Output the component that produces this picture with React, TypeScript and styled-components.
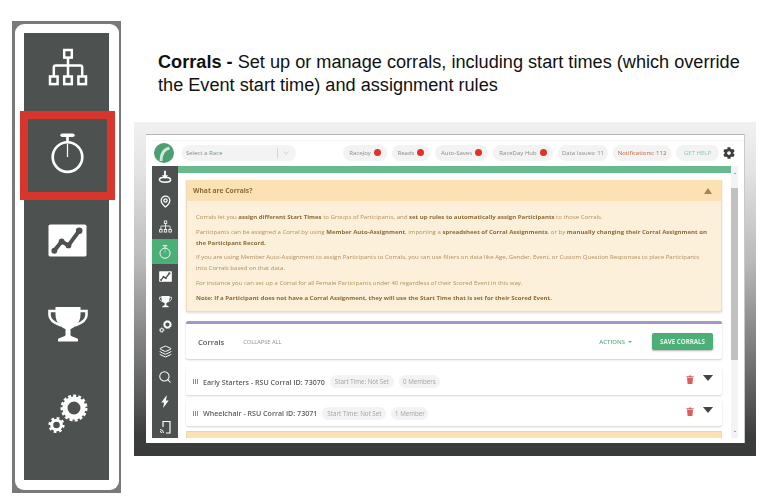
import React from "react";
import styled, { createGlobalStyle } from "styled-components";
import { ChevronDown, Layers, MapPin, Search } from "lucide-react";
import { FaCog } from "react-icons/fa";

const GlobalStyle = createGlobalStyle`
  html, body {
    margin: 0;
    padding: 0;
    background: #fff;
  }
  body {
    font-family: "Open Sans", "Liberation Sans", sans-serif;
  }
`;

const Page = styled.div`
  display: flex;
  width: 768px;
  height: 503px;
  overflow: hidden;
  background: #fff;
`;

/* left column: the enlarged crop of the nav */
const NavFrame = styled.div`
  box-sizing: border-box;
  width: 109px;
  height: 472px;
  margin: 21px 0 0 12px;
  padding: 3px 2px 3px 3px;
  background: #77797a;
  filter: blur(0.4px);
`;

const NavCard = styled.div`
  box-sizing: border-box;
  height: 100%;
  padding: 9px 10px 10px 9px;
  background: #fff;
  border-radius: 9px;
`;

const NavDark = styled.div`
  display: flex;
  flex-direction: column;
  height: 100%;
  background: #4d5150;
`;

const NavItem = styled.div<{ $h: number; $pad?: number }>`
  display: flex;
  align-items: center;
  justify-content: center;
  flex: none;
  box-sizing: border-box;
  height: ${(p) => p.$h}px;
  padding-bottom: ${(p) => p.$pad ?? 0}px;
  padding-left: 2px;
  color: #fff;
`;

const NavActive = styled(NavItem)`
  margin: 0 -6px 0 -4px;
  padding: 0 0 ${(p) => p.$pad ?? 0}px 0;
  border: 8px solid #d8352c;
  background: #4d5150;
`;

/* right column */
const Main = styled.div`
  display: flex;
  flex-direction: column;
  margin-left: 13px;
  width: 622px;
`;

const Heading = styled.h1`
  box-sizing: border-box;
  height: 122px;
  margin: 0;
  padding: 51px 0 0 24px;
  font-family: "Liberation Sans", Arial, sans-serif;
  font-size: 18.15px;
  font-weight: 400;
  line-height: 23px;
  white-space: nowrap;
  color: #111;
  strong {
    font-weight: 700;
  }
`;

const Backdrop = styled.div`
  box-sizing: border-box;
  height: 334px;
  padding: 12px 12px 13px;
  background: linear-gradient(
    to bottom,
    #f1f1f1 0%,
    #e4e4e4 14%,
    #b9b9b9 42%,
    #8a8a8a 62%,
    #5a5c5c 82%,
    #3b3c3c 94%,
    #393a3a 100%
  );
`;

const Window = styled.div`
  display: flex;
  flex-direction: column;
  height: 100%;
  box-sizing: border-box;
  padding: 0 0 5px 6px;
  background: #fff;
  border-top: 1px solid #b4b4b4;
  box-shadow: 1px 0 0 #c9c9c9;
  filter: blur(0.45px);
`;

const TopBar = styled.div`
  display: flex;
  align-items: center;
  flex: none;
  height: 31px;
  padding: 4px 0 0 2px;
  box-sizing: border-box;
  box-shadow: inset 0 5px 0 #fff, inset 0 6px 0 #f3f3f3;
`;

const Logo = styled.svg`
  width: 20px;
  height: 20px;
  flex: none;
`;

const RaceSelect = styled.div`
  display: flex;
  align-items: center;
  box-sizing: border-box;
  width: 114px;
  height: 16px;
  margin: 0 47px 0 8px;
  padding: 0 5px 0 4px;
  background: #f3f3f3;
  border-radius: 8px;
  font-size: 6px;
  color: #8b8b8b;
  span {
    flex: 1;
  }
  svg {
    border-left: 1px solid #d5d5d5;
    padding-left: 3px;
  }
`;

const Pill = styled.div<{ $w: number; $color?: string }>`
  display: flex;
  align-items: center;
  justify-content: center;
  gap: 3px;
  flex: none;
  width: ${(p) => p.$w}px;
  height: 16px;
  margin-right: 5px;
  background: #f3f3f3;
  border-radius: 8px;
  font-size: 6px;
  color: ${(p) => p.$color ?? "#8b8b8b"};
  white-space: nowrap;
`;

const Dot = styled.i`
  width: 7px;
  height: 7px;
  border-radius: 50%;
  background: #e0312b;
`;

const GearWrap = styled.div`
  display: flex;
  color: #3d3d3d;
  margin-left: -1px;
`;

const Body = styled.div`
  display: flex;
  flex: 1;
  min-height: 0;
`;

const Side = styled.div`
  display: flex;
  flex-direction: column;
  flex: none;
  width: 26px;
  box-sizing: border-box;
  background: #4d5150;
  overflow: hidden;
  > :first-child {
    margin-top: -2px;
  }
`;

const SideItem = styled.div<{ $active?: boolean }>`
  display: flex;
  align-items: center;
  justify-content: center;
  flex: none;
  height: 25px;
  color: #fff;
  background: ${(p) => (p.$active ? "#4caf78" : "transparent")};
`;

const Content = styled.div`
  display: flex;
  flex-direction: column;
  flex: none;
  width: 553px;
  overflow: hidden;
`;

const GreenBar = styled.div`
  flex: none;
  height: 7px;
  background: #68ba8e;
`;

const Stack = styled.div`
  display: flex;
  flex-direction: column;
  padding: 7px 9px 0 8px;
`;

const Alert = styled.section`
  flex: none;
  height: 132px;
  box-sizing: border-box;
  background: #fdf0db;
  border: 1px solid #f2dcb6;
  border-top: 0;
  margin-bottom: 9px;
  box-shadow: 0 1px 2px rgba(0, 0, 0, 0.14);
`;

const AlertHead = styled.div`
  display: flex;
  align-items: center;
  justify-content: space-between;
  height: 21px;
  padding: 0 9px 0 6px;
  background: #fbe1b3;
  font-size: 6.7px;
  font-weight: 700;
  color: #8d6b35;
`;

const Triangle = styled.i<{ $down?: boolean; $color: string; $w: number; $h?: number }>`
  width: 0;
  height: 0;
  flex: none;
  border-left: ${(p) => p.$w}px solid transparent;
  border-right: ${(p) => p.$w}px solid transparent;
  ${(p) =>
    p.$down
      ? `border-top: ${p.$h ?? p.$w}px solid ${p.$color};`
      : `border-bottom: ${p.$h ?? p.$w}px solid ${p.$color};`}
`;

const AlertBody = styled.div`
  padding: 11px 8px 0 9px;
  font-size: 6.05px;
  line-height: 10.8px;
  color: #b08e58;
  p {
    margin: 0 0 4px;
    white-space: nowrap;
  }
  strong {
    font-weight: 700;
    color: #8d6b35;
  }
`;

const Card = styled.div`
  display: flex;
  align-items: center;
  flex: none;
  height: 38px;
  box-sizing: border-box;
  margin-bottom: 9px;
  padding: 0 9px 0 12px;
  background: #fff;
  border-top: 3px solid #a598c9;
  border-radius: 2px;
  box-shadow: 0 1px 2px rgba(0, 0, 0, 0.2);
`;

const CardTitle = styled.div`
  font-size: 7.6px;
  font-weight: 600;
  color: #555;
  margin-right: 19px;
`;

const Collapse = styled.div`
  flex: 1;
  font-size: 5.7px;
  color: #909090;
`;

const Actions = styled.div`
  display: flex;
  align-items: center;
  gap: 3px;
  margin-right: 20px;
  font-size: 6px;
  font-weight: 600;
  color: #5fae85;
`;

const SaveButton = styled.button`
  width: 61px;
  height: 17px;
  padding: 0;
  border: 0;
  border-radius: 2px;
  background: #4caf78;
  box-shadow: 0 1px 2px rgba(0, 0, 0, 0.3);
  font-family: inherit;
  font-size: 6.2px;
  font-weight: 700;
  color: #e6f5ec;
`;

const Row = styled.div<{ $h: number }>`
  display: flex;
  align-items: center;
  flex: none;
  height: ${(p) => p.$h}px;
  box-sizing: border-box;
  margin-bottom: 5px;
  padding: 0 9px 0 7px;
  background: #fff;
  border-radius: 2px;
  box-shadow: 0 1px 2px rgba(0, 0, 0, 0.18);
`;

const Grip = styled.svg`
  width: 5px;
  height: 5px;
  flex: none;
  margin-right: 5px;
`;

const RowTitle = styled.div`
  font-size: 7.1px;
  font-weight: 600;
  color: #5d5d5d;
  white-space: nowrap;
`;

const Tag = styled.div<{ $w: number }>`
  display: flex;
  align-items: center;
  justify-content: center;
  flex: none;
  width: ${(p) => p.$w}px;
  height: 13px;
  margin-left: 5px;
  background: #f3f3f3;
  border-radius: 7px;
  font-size: 6.2px;
  color: #a2a2a2;
  white-space: nowrap;
`;

const RowEnd = styled.div`
  display: flex;
  align-items: flex-start;
  gap: 9px;
  margin-left: auto;
  padding-bottom: 4px;
`;

const Strip = styled.div`
  flex: none;
  height: 8px;
  background: #fbe1b3;
  border: 1px solid #ecd6ae;
  border-bottom: 0;
  box-sizing: border-box;
`;

const Scrollbar = styled.div`
  display: flex;
  flex-direction: column;
  align-items: center;
  flex: none;
  width: 7px;
  background: #f3f3f3;
`;

const ScrollArrow = styled.div`
  flex: none;
  height: 14px;
  display: flex;
  align-items: center;
  justify-content: center;
`;

const ScrollThumb = styled.div`
  flex: none;
  width: 100%;
  height: 172px;
  margin: 8px 0 auto;
  background: #c1c1c1;
`;

/* drawings */
const SitemapIcon = ({ size }: { size: number }) => (
  <svg width={size} height={size} viewBox="0 0 40 38" fill="none" stroke="currentColor" strokeWidth="2.5">
    <rect x="16.2" y="2" width="7.6" height="7.6" />
    <rect x="2" y="28.5" width="7.6" height="7.6" />
    <rect x="16.2" y="28.5" width="7.6" height="7.6" />
    <rect x="30.4" y="28.5" width="7.6" height="7.6" />
    <path d="M20 9.6V28.5M5.8 28.5V19.5Q5.8 17.5 7.8 17.5H32.2Q34.2 17.5 34.2 19.5V28.5" />
  </svg>
);

const WatchIcon = ({ size }: { size: number }) => (
  <svg width={size} height={size} viewBox="0 0 40 46" fill="none" stroke="currentColor">
    <path d="M14 2.5H26" strokeWidth="4" strokeLinecap="round" />
    <path d="M20 4V10" strokeWidth="3" />
    <circle cx="20" cy="27" r="16.6" strokeWidth="3" />
    <path d="M20 12V27" strokeWidth="1.4" />
  </svg>
);

const ChartIcon = ({ size }: { size: number }) => (
  <svg width={size} height={size} viewBox="0 0 40 34">
    <rect x="0.5" y="0.5" width="39" height="33" rx="2" fill="currentColor" />
    <path d="M6 28L14 18L21 22L32 7" fill="none" stroke="#4d5150" strokeWidth="4" strokeLinejoin="round" />
    <g fill="#4d5150">
      <circle cx="6.5" cy="27.5" r="3" />
      <circle cx="14" cy="18" r="3" />
      <circle cx="21" cy="22" r="3" />
      <circle cx="32" cy="7" r="3.4" />
    </g>
  </svg>
);

const TrophyIcon = ({ size }: { size: number }) => (
  <svg width={size} height={size} viewBox="0 0 40 36">
    <path
      d="M7.5 1H32.5V9C32.500 17 26 22 22.500 23V29C22.500 30.500 27 31 30 33V35.500H10V33C13 31 17.500 30.500 17.500 29V23C14 22 7.500 17 7.500 9Z"
      fill="currentColor"
    />
    <path
      d="M8.500 5H1.500V9C1.500 13.500 6 17 13 19.500M31.500 5H38.500V9C38.500 13.500 34 17 27 19.500"
      fill="none"
      stroke="currentColor"
      strokeWidth="2.600"
    />
  </svg>
);

const GearsIcon = ({ size }: { size: number }) => (
  <svg width={size} height={size} viewBox="0 0 40 40" fill="none" stroke="currentColor">
    <circle cx="26" cy="14" r="9" strokeWidth="5" />
    <circle cx="26" cy="14" r="12" strokeWidth="3" strokeDasharray="3 2.03" />
    <circle cx="8.500" cy="31" r="4.800" strokeWidth="3" />
    <circle cx="8.500" cy="31" r="6.800" strokeWidth="2.600" strokeDasharray="2.600 2.740" />
  </svg>
);

const TrayIcon = () => (
  <svg width="14" height="14" viewBox="0 0 20 20" fill="none" stroke="currentColor">
    <ellipse cx="10" cy="14" rx="8" ry="3.500" strokeWidth="2.200" />
    <path d="M10 1V10" strokeWidth="2.600" />
    <path d="M5.500 7.500L10 13L14.500 7.500Z" fill="currentColor" stroke="none" />
  </svg>
);

const BoltIcon = () => (
  <svg width="12" height="13" viewBox="0 0 12 14" fill="currentColor">
    <path d="M8 0L2 8H5L4 14L10 6H7Z" />
  </svg>
);

const CastPhoneIcon = () => (
  <svg width="13" height="14" viewBox="0 0 13 14" fill="none" stroke="currentColor" strokeWidth="1.200">
    <path d="M4 7V1.500H11V13H7" />
    <path d="M1 9.500A3.500 3.500 0 0 1 4.500 13M1 11.500A1.500 1.500 0 0 1 2.500 13" strokeWidth="1" />
  </svg>
);

const TrashIcon = () => (
  <svg width="8" height="9" viewBox="0 0 8 9" fill="#d9605a">
    <path d="M0.300 1.300H3V0.400H5V1.300H7.700V2.200H0.300ZM1 2.800H7L6.400 9H1.600Z" />
  </svg>
);

const races = [
  { label: "RaceJoy", w: 44 },
  { label: "Reads", w: 38 },
  { label: "Auto-Saves", w: 53 },
  { label: "RaceDay Hub", w: 60 },
];

const sideItems = [
  <TrayIcon />,
  <MapPin size={13} strokeWidth={2.4} />,
  <SitemapIcon size={13} />,
  <WatchIcon size={14} />,
  <ChartIcon size={13} />,
  <TrophyIcon size={13} />,
  <GearsIcon size={13} />,
  <Layers size={13} strokeWidth={1.8} />,
  <Search size={14} strokeWidth={1.8} />,
  <BoltIcon />,
  <CastPhoneIcon />,
];

const GripMark = () => (
  <Grip viewBox="0 0 5 5" fill="#8a8a8a">
    <path d="M0 0H1V5H0ZM2 0H3V5H2ZM4 0H5V5H4Z" />
  </Grip>
);

const corrals = [
  { name: "Early Starters - RSU Corral ID: 73070", members: "0 Members", w: 41, startW: 64, h: 27 },
  { name: "Wheelchair - RSU Corral ID: 73071", members: "1 Member", w: 37, startW: 64, h: 26 },
];

export default function App() {
  return (
    <>
      <GlobalStyle />
      <Page>
        <NavFrame>
          <NavCard>
            <NavDark>
              <NavItem $h={78} $pad={11}>
                <SitemapIcon size={40} />
              </NavItem>
              <NavActive $h={89} $pad={4}>
                <WatchIcon size={41} />
              </NavActive>
              <NavItem $h={80}>
                <ChartIcon size={39} />
              </NavItem>
              <NavItem $h={90} $pad={2}>
                <TrophyIcon size={40} />
              </NavItem>
              <NavItem $h={110} $pad={22}>
                <GearsIcon size={40} />
              </NavItem>
            </NavDark>
          </NavCard>
        </NavFrame>
        <Main>
          <Heading>
            <strong>Corrals - </strong>Set up or manage corrals, including start times (which override
            <br />
            the Event start time) and assignment rules
          </Heading>
          <Backdrop>
            <Window>
              <TopBar>
                <Logo viewBox="0 0 20 20">
                  <circle cx="10" cy="10" r="10" fill="#4c9f70" />
                  <path d="M7 18C7 11 9 6.500 15.500 5" fill="none" stroke="#cfe9da" strokeWidth="3" />
                </Logo>
                <RaceSelect>
                  <span>Select a Race</span>
                  <ChevronDown size={10} strokeWidth={1.2} color="#aaa" />
                </RaceSelect>
                {races.map((r) => (
                  <Pill key={r.label} $w={r.w}>
                    {r.label}
                    <Dot />
                  </Pill>
                ))}
                <Pill $w={50}>Data Issues: 11</Pill>
                <Pill $w={58} $color="#c2603f">
                  Notifications: 112
                </Pill>
                <Pill $w={43} $color="#8ccbaa">
                  GET HELP
                </Pill>
                <GearWrap>
                  <FaCog size={12} />
                </GearWrap>
              </TopBar>
              <Body>
                <Side>
                  {sideItems.map((icon, i) => (
                    <SideItem key={i} $active={i === 3}>
                      {icon}
                    </SideItem>
                  ))}
                </Side>
                <Content>
                  <GreenBar />
                  <Stack>
                    <Alert>
                      <AlertHead>
                        What are Corrals?
                        <Triangle $color="#a9854a" $w={4.5} $h={6} />
                      </AlertHead>
                      <AlertBody>
                        <p>
                          Corrals let you <strong>assign different Start Times</strong> to Groups of Participants, and{" "}
                          <strong>set up rules to automatically assign Participants</strong> to those Corrals.
                        </p>
                        <p>
                          Participants can be assigned a Corral by using <strong>Member Auto-Assignment</strong>,
                          importing a <strong>spreadsheet of Corral Assignments</strong>, or by{" "}
                          <strong>manually changing their Corral Assignment on</strong>
                          <br />
                          <strong>the Participant Record.</strong>
                        </p>
                        <p>
                          If you are using Member Auto-Assignment to assign Participants to Corrals, you can use filters
                          on data like Age, Gender, Event, or Custom Question Responses to place Participants
                          <br />
                          into Corrals based on that data.
                        </p>
                        <p>
                          For instance you can set up a Corral for all Female Participants under 40 regardless of their
                          Scored Event in this way.
                        </p>
                        <p>
                          <strong>
                            Note: If a Participant does not have a Corral Assignment, they will use the Start Time that
                            is set for their Scored Event.
                          </strong>
                        </p>
                      </AlertBody>
                    </Alert>
                    <Card>
                      <CardTitle>Corrals</CardTitle>
                      <Collapse>COLLAPSE ALL</Collapse>
                      <Actions>
                        ACTIONS
                        <Triangle $down $color="#5fae85" $w={2} />
                      </Actions>
                      <SaveButton>SAVE CORRALS</SaveButton>
                    </Card>
                    {corrals.map((c) => (
                      <Row key={c.name} $h={c.h}>
                        <GripMark />
                        <RowTitle>{c.name}</RowTitle>
                        <Tag $w={c.startW}>Start Time: Not Set</Tag>
                        <Tag $w={c.w}>{c.members}</Tag>
                        <RowEnd>
                          <TrashIcon />
                          <Triangle $down $color="#444" $w={5} $h={6} />
                        </RowEnd>
                      </Row>
                    ))}
                    <Strip />
                  </Stack>
                </Content>
                <Scrollbar>
                  <ScrollArrow>
                    <Triangle $color="#555" $w={1.5} />
                  </ScrollArrow>
                  <ScrollThumb />
                  <ScrollArrow>
                    <Triangle $down $color="#555" $w={1.5} />
                  </ScrollArrow>
                </Scrollbar>
              </Body>
            </Window>
          </Backdrop>
        </Main>
      </Page>
    </>
  );
}
